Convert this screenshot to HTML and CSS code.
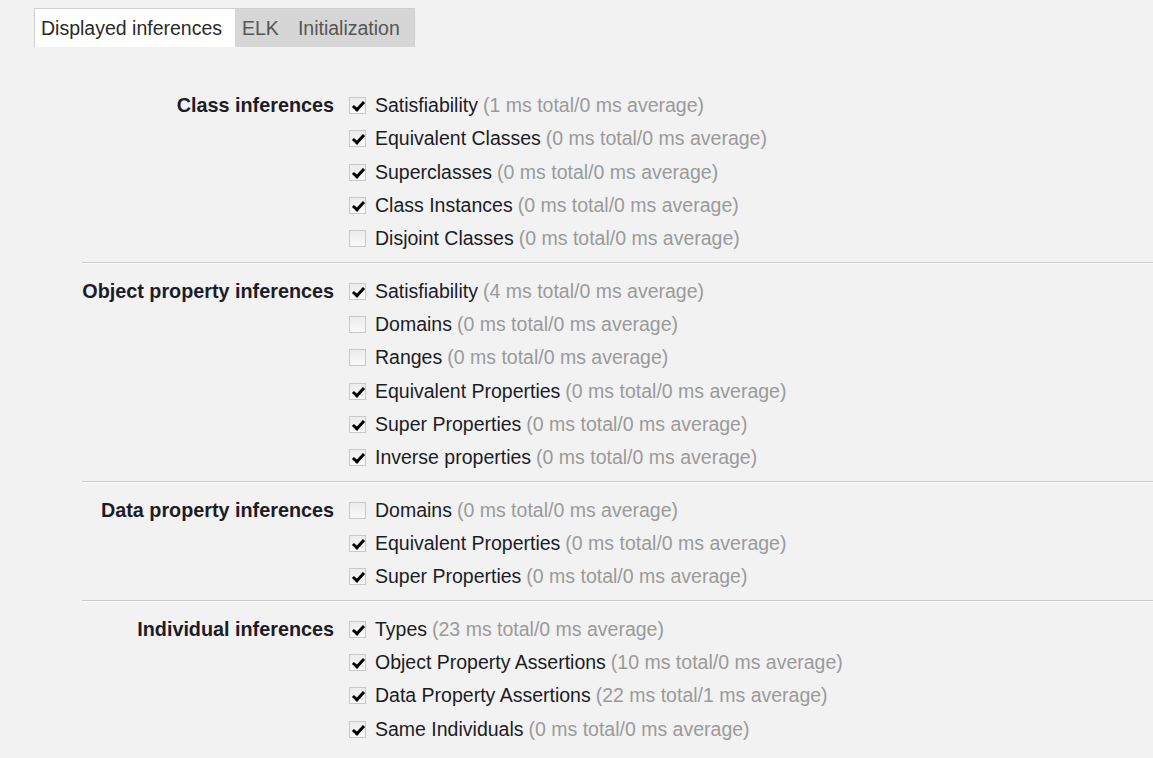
FILE: index.html
```html
<!DOCTYPE html>
<html>
<head>
<meta charset="utf-8">
<link rel="stylesheet" href="styles.css">
</head>
<body>
<div class="tabs">
  <div class="tab active">Displayed inferences</div>
  <div class="tab elk">ELK</div>
  <div class="tab init">Initialization</div>
</div>

<div class="sections">
  <section class="group">
    <div class="label">Class inferences</div>
    <ul class="items">
      <li><span class="cb on"></span><span class="name">Satisfiability</span><span class="stat">(1 ms total/0 ms average)</span></li>
      <li><span class="cb on"></span><span class="name">Equivalent Classes</span><span class="stat">(0 ms total/0 ms average)</span></li>
      <li><span class="cb on"></span><span class="name">Superclasses</span><span class="stat">(0 ms total/0 ms average)</span></li>
      <li><span class="cb on"></span><span class="name">Class Instances</span><span class="stat">(0 ms total/0 ms average)</span></li>
      <li><span class="cb"></span><span class="name">Disjoint Classes</span><span class="stat">(0 ms total/0 ms average)</span></li>
    </ul>
  </section>
  <section class="group">
    <div class="label">Object property inferences</div>
    <ul class="items">
      <li><span class="cb on"></span><span class="name">Satisfiability</span><span class="stat">(4 ms total/0 ms average)</span></li>
      <li><span class="cb"></span><span class="name">Domains</span><span class="stat">(0 ms total/0 ms average)</span></li>
      <li><span class="cb"></span><span class="name">Ranges</span><span class="stat">(0 ms total/0 ms average)</span></li>
      <li><span class="cb on"></span><span class="name">Equivalent Properties</span><span class="stat">(0 ms total/0 ms average)</span></li>
      <li><span class="cb on"></span><span class="name">Super Properties</span><span class="stat">(0 ms total/0 ms average)</span></li>
      <li><span class="cb on"></span><span class="name">Inverse properties</span><span class="stat">(0 ms total/0 ms average)</span></li>
    </ul>
  </section>
  <section class="group">
    <div class="label">Data property inferences</div>
    <ul class="items">
      <li><span class="cb"></span><span class="name">Domains</span><span class="stat">(0 ms total/0 ms average)</span></li>
      <li><span class="cb on"></span><span class="name">Equivalent Properties</span><span class="stat">(0 ms total/0 ms average)</span></li>
      <li><span class="cb on"></span><span class="name">Super Properties</span><span class="stat">(0 ms total/0 ms average)</span></li>
    </ul>
  </section>
  <section class="group">
    <div class="label">Individual inferences</div>
    <ul class="items">
      <li><span class="cb on"></span><span class="name">Types</span><span class="stat">(23 ms total/0 ms average)</span></li>
      <li><span class="cb on"></span><span class="name">Object Property Assertions</span><span class="stat">(10 ms total/0 ms average)</span></li>
      <li><span class="cb on"></span><span class="name">Data Property Assertions</span><span class="stat">(22 ms total/1 ms average)</span></li>
      <li><span class="cb on"></span><span class="name">Same Individuals</span><span class="stat">(0 ms total/0 ms average)</span></li>
    </ul>
  </section>
</div>
</body>
</html>
```

FILE: styles.css
```css
html, body {
  margin: 0;
  padding: 0;
  background: #f2f2f2;
  font-family: "Liberation Sans", Arial, sans-serif;
  font-size: 19.5px;
  color: #1c1c26;
}

.tabs {
  display: flex;
  margin: 8px 0 0 34px;
  width: max-content;
  border: 1px solid #cfcfcf;
  border-bottom: none;
  height: 38px;
  font-size: 19.5px;
}

.tab {
  background: #d6d6d6;
  color: #555;
  line-height: 38px;
}

.tab.active {
  background: #ffffff;
  color: #2a2a2a;
  padding: 0 13px 0 6px;
}

.tab.elk {
  padding: 0 7px 0 7px;
}

.tab.init {
  padding: 0 14px 0 12px;
}

.sections {
  margin: 42px 0 0 82px;
}

.group {
  display: grid;
  grid-template-columns: 252px 1fr;
  padding: 12px 0 6px;
  border-top: 1px solid #cbcbcb;
  box-shadow: inset 0 1px 0 #fafafa;
}

.group:first-child {
  border-top: none;
  box-shadow: none;
  padding-top: 0;
}

.label {
  font-weight: bold;
  text-align: right;
  line-height: 33.33px;
  height: 33.33px;
  font-size: 19.8px;
}

.items {
  list-style: none;
  margin: 0;
  padding: 0 0 0 15px;
}

.items li {
  display: flex;
  align-items: center;
  height: 33.33px;
  white-space: pre;
}

.name {
  margin-left: 9px;
}

.stat {
  margin-left: 5px;
  color: #9a9a9a;
}

.cb {
  width: 15px;
  height: 15px;
  border: 1px solid #c9c9c9;
  background: linear-gradient(#ececec, #f9f9f9);
  flex: none;
  position: relative;
}

.cb.on::after {
  content: "";
  position: absolute;
  left: 5px;
  top: 1px;
  width: 4px;
  height: 9px;
  border: solid #000;
  border-width: 0 3px 3px 0;
  transform: rotate(42deg);
}
```
